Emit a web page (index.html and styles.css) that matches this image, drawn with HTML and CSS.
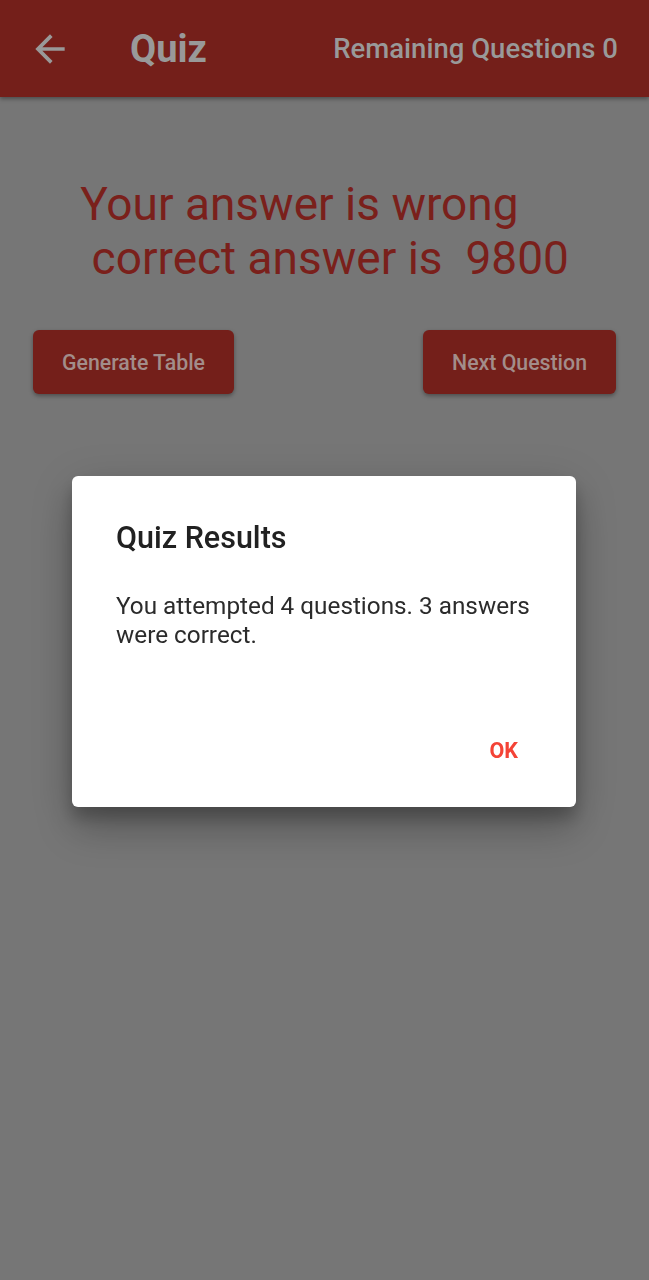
FILE: index.html
```html
<!DOCTYPE html>
<html lang="en">
<head>
<meta charset="utf-8">
<title>Quiz</title>
<link rel="stylesheet" href="styles.css">
</head>
<body>
<div class="screen">
  <header class="appbar">
    <svg class="back" viewBox="0 0 24 24" aria-hidden="true">
      <path d="M20 11H7.83l5.59-5.59L12 4l-8 8 8 8 1.41-1.41L7.83 13H20v-2z" fill="currentColor"/>
    </svg>
    <h1 class="title">Quiz</h1>
    <span class="remaining">Remaining Questions 0</span>
  </header>
  <main class="content">
    <div class="result-wrap">
      <p class="result">Your answer is wrong
 correct answer is  9800</p>
    </div>
    <div class="actions">
      <button class="btn">Generate Table</button>
      <button class="btn">Next Question</button>
    </div>
  </main>
</div>
<div class="overlay">
  <div class="dialog">
    <h2 class="dialog-title">Quiz Results</h2>
    <p class="dialog-body">You attempted 4 questions. 3 answers were correct.</p>
    <div class="dialog-actions">
      <button class="ok">OK</button>
    </div>
  </div>
</div>
</body>
</html>
```
FILE: styles.css
```css
* { box-sizing: border-box; }
html, body {
  margin: 0;
  padding: 0;
  height: 100%;
}
body {
  font-family: Roboto, "Liberation Sans", sans-serif;
  background: #767676;
}
.screen {
  min-height: 100%;
}
.appbar {
  height: 97px;
  background: #741f1a;
  display: flex;
  align-items: center;
  padding: 0 31px 0 28px;
  box-shadow: 0 2px 4px rgba(0,0,0,0.35);
  color: #999999;
}
.back {
  width: 44px;
  height: 44px;
  flex: none;
}
.title {
  margin: 0 0 0 58px;
  font-size: 38px;
  font-weight: 700;
  flex: 1;
}
.remaining {
  font-size: 27.5px;
  font-weight: 500;
}
.content {
  padding-top: 80px;
}
.result-wrap {
  display: flex;
  justify-content: center;
}
.result {
  margin: 0;
  white-space: pre;
  font-size: 46px;
  line-height: 54px;
  color: #7a201b;
  text-align: left;
}
.actions {
  display: flex;
  justify-content: space-between;
  padding: 0 33px;
  margin-top: 45px;
}
.btn {
  height: 64px;
  border: none;
  border-radius: 6px;
  background: #741f1a;
  color: #a28d8a;
  font-family: Roboto, "Liberation Sans", sans-serif;
  font-size: 21.3px;
  font-weight: 500;
  padding: 0 29px;
  box-shadow: 0 2px 4px rgba(0,0,0,0.35);
}
.overlay {
  position: fixed;
  inset: 0;
  display: flex;
  align-items: flex-start;
  justify-content: center;
  padding-top: 476px;
}
.dialog {
  width: 504px;
  height: 331px;
  margin-left: -1px;
  background: #ffffff;
  border-radius: 6px;
  padding: 44px 36px 0 44px;
  box-shadow: 0 24px 38px rgba(0,0,0,0.18), 0 9px 46px rgba(0,0,0,0.14), 0 11px 15px rgba(0,0,0,0.2);
  display: flex;
  flex-direction: column;
}
.dialog-title {
  margin: 0;
  font-size: 30.5px;
  font-weight: 500;
  line-height: 36px;
  color: #212121;
}
.dialog-body {
  margin: 35px 0 0 0;
  font-size: 24.3px;
  line-height: 29px;
  color: #2b2b2b;
}
.dialog-actions {
  margin-top: auto;
  display: flex;
  justify-content: flex-end;
  padding: 0 8px 44px 0;
}
.ok {
  border: none;
  background: none;
  color: #f44336;
  font-family: Roboto, "Liberation Sans", sans-serif;
  font-size: 21.5px;
  font-weight: 700;
  padding: 0 14px;
}
```
